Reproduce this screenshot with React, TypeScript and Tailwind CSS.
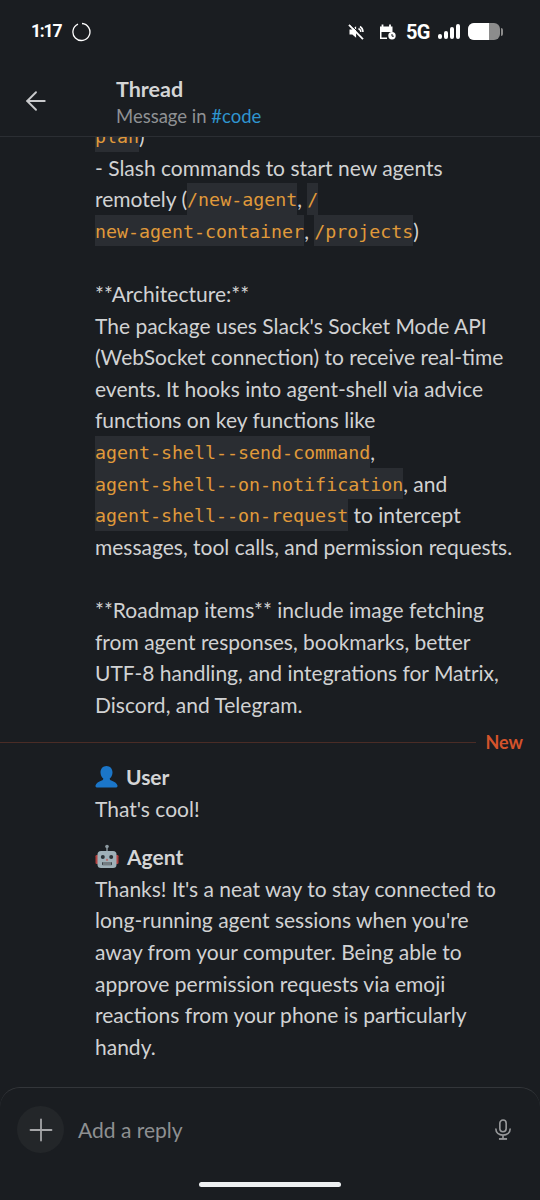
import React from 'react';
import { ArrowLeft, Plus } from 'lucide-react';

const Code: React.FC<{ children: React.ReactNode }> = ({ children }) => (
  <span className="inline-block h-[31.6px] leading-[33.6px] bg-[#2a2d32] text-[#e09a3a] font-['DejaVu_Sans_Mono',monospace] text-[18.3px] align-top">{children}</span>
);

const Line: React.FC<{ children?: React.ReactNode }> = ({ children }) => (
  <div className="h-[31.6px] leading-[31.6px] whitespace-nowrap">{children}</div>
);

const UserEmoji = () => (
  <svg width="23" height="24" viewBox="0 0 23 24" className="shrink-0">
    <path d="M11.500 1c3.600 0 6 2.800 6 6.400 0 2.600-1.200 4.800-2.800 6 .1 1 .5 1.600 1.600 2.100 3 1.200 5.700 2.600 6.200 5.100.2.900-.3 1.900-1.300 1.900H1.800c-1 0-1.500-1-1.300-1.900.5-2.500 3.200-3.900 6.200-5.100 1.100-.5 1.500-1.100 1.600-2.100-1.600-1.200-2.800-3.400-2.800-6C5.500 3.800 7.900 1 11.500 1z" fill="#1b76c9" />
  </svg>
);

const RobotEmoji = () => (
  <svg width="24" height="25" viewBox="0 0 24 25" className="shrink-0">
    <rect x="0.500" y="11" width="3" height="9" rx="1.200" fill="#b5413f" />
    <rect x="20.500" y="11" width="3" height="9" rx="1.200" fill="#b5413f" />
    <rect x="11.300" y="3" width="1.400" height="5" fill="#8d9aa1" />
    <circle cx="12" cy="2.500" r="1.800" fill="#8d9aa1" />
    <rect x="2.500" y="7" width="19" height="17" rx="3.500" fill="#9fb0b8" />
    <circle cx="7.800" cy="13" r="2" fill="#2b3338" />
    <circle cx="16.200" cy="13" r="2" fill="#2b3338" />
    <path d="M12 14.500l1.200 2h-2.400z" fill="#c9463f" />
    <rect x="7" y="18" width="10" height="3.200" rx="1" fill="#3a4349" />
    <path d="M9 18v3.200M11 18v3.200M13 18v3.200M15 18v3.200" stroke="#c9d3d8" strokeWidth="0.800" />
  </svg>
);

const StatusIcons = () => (
  <div className="flex items-center text-white">
    {/* muted speaker */}
    <svg width="18" height="18" viewBox="0 0 18 18" className="mr-[14px]">
      <path d="M2.500 6.500h2.800l3.800-3.300v11.600l-3.800-3.300H2.500z" fill="#fff" />
      <path d="M11.500 5.500c1.600 1 2.400 2.200 2.400 3.500M13 3.500c2 1.300 3 3.300 3 5.500" stroke="#fff" strokeWidth="1.500" fill="none" />
      <path d="M2 1.800l14 14.400" stroke="#fff" strokeWidth="1.900" />
      <path d="M3.200 1l14 14.400" stroke="#1a1d21" strokeWidth="1" />
    </svg>
    {/* calendar with clock */}
    <svg width="17" height="17" viewBox="0 0 17 17" className="mr-[10px]">
      <path d="M1 3.500h12.500v5.500H2.500v5.500h5.500V16H1z" fill="#fff" />
      <path d="M3.500 1.500v3M11 1.500v3" stroke="#fff" strokeWidth="1.800" />
      <circle cx="13" cy="12.800" r="3.700" fill="#fff" />
      <path d="M13 11v2.200h1.800" stroke="#1a1d21" strokeWidth="1" fill="none" />
    </svg>
    <span className="font-['Roboto',sans-serif] font-bold text-[20px] leading-none mr-[8px] tracking-[-0.5px]">5G</span>
    {/* signal */}
    <div className="flex items-end gap-[2px] h-[15px] mr-[8px]">
      <div className="w-[4px] h-[5px] rounded-[2px] bg-white" />
      <div className="w-[4px] h-[8px] rounded-[2px] bg-white" />
      <div className="w-[4px] h-[12px] rounded-[2px] bg-white" />
      <div className="w-[4px] h-[15px] rounded-[2px] bg-white" />
    </div>
    {/* battery */}
    <div className="flex h-[17px] w-[32px] rounded-[6px] overflow-hidden bg-[#8c8c8c]">
      <div className="w-[21px] bg-white" />
    </div>
    <div className="ml-[1px] h-[8px] w-[2px] rounded-r-[2px] bg-[#8c8c8c]" />
  </div>
);

export default function App() {
  return (
    <div className="h-[1200px] w-[540px] flex flex-col overflow-hidden bg-[#1a1d21] font-['Lato',sans-serif]">
      {/* status bar */}
      <div className="h-[64px] shrink-0 flex items-center justify-between pl-[31px] pr-[37px] pb-[1px]">
        <div className="flex items-center gap-[11px]">
          <span className="text-white text-[17.500px] font-bold leading-none tracking-[-1.200px] font-['Roboto',sans-serif]">1:17</span>
          <svg width="20" height="20" viewBox="0 0 20 20">
            <path d="M6 2.200A8.500 8.500 0 1 0 10 1.500" stroke="#fff" strokeWidth="1.300" fill="none" />
          </svg>
        </div>
        <StatusIcons />
      </div>

      {/* header */}
      <div className="h-[73px] shrink-0 flex border-b border-[#2b2e33]">
        <div className="w-[116px] pl-[21px] pt-[22px] text-[#c9cacc]">
          <ArrowLeft size={30} strokeWidth={1.500} />
        </div>
        <div className="pt-[12px]">
          <div className="text-[#d4d5d6] text-[21.500px] font-bold leading-[27px]">Thread</div>
          <div className="text-[#8f9194] text-[18.500px] leading-[27px]">
            Message in <span className="text-[#2f95cf]">#code</span>
          </div>
        </div>
      </div>

      {/* messages */}
      <div className="flex-1 min-h-0 overflow-hidden">
        <div className="-mt-[17px] text-[#d1d2d3] text-[21px]">
          <div className="pl-[95px]">
            <Line><Code>plan</Code>)</Line>
            <Line>- Slash commands to start new agents</Line>
            <Line>remotely (<Code>/new-agent</Code>, <Code>/</Code></Line>
            <Line><Code>new-agent-container</Code>, <Code>/projects</Code>)</Line>
            <Line />
            <Line>**Architecture:**</Line>
            <Line>The package uses Slack's Socket Mode API</Line>
            <Line>(WebSocket connection) to receive real-time</Line>
            <Line>events. It hooks into agent-shell via advice</Line>
            <Line>functions on key functions like</Line>
            <Line><Code>agent-shell--send-command</Code>,</Line>
            <Line><Code>agent-shell--on-notification</Code>, and</Line>
            <Line><Code>agent-shell--on-request</Code> to intercept</Line>
            <Line>messages, tool calls, and permission requests.</Line>
            <Line />
            <Line>**Roadmap items** include image fetching</Line>
            <Line>from agent responses, bookmarks, better</Line>
            <Line>UTF-8 handling, and integrations for Matrix,</Line>
            <Line>Discord, and Telegram.</Line>
          </div>

          <div className="mt-[10px] flex items-center h-[24px] pr-[17px]">
            <div className="flex-1 h-px bg-[#4a2c26]" />
            <span className="ml-[9px] text-[#d4532b] text-[18px] font-bold leading-none">New</span>
          </div>

          <div className="pl-[95px] mt-[6px]">
            <div className="flex items-center gap-[8px] h-[33px] font-bold text-[21px] text-[#d4d5d6]">
              <UserEmoji />
              <span>User</span>
            </div>
            <Line>That's cool!</Line>
            <div className="flex items-center gap-[8px] h-[32px] mt-[16px] font-bold text-[21px] text-[#d4d5d6]">
              <RobotEmoji />
              <span>Agent</span>
            </div>
            <Line>Thanks! It's a neat way to stay connected to</Line>
            <Line>long-running agent sessions when you're</Line>
            <Line>away from your computer. Being able to</Line>
            <Line>approve permission requests via emoji</Line>
            <Line>reactions from your phone is particularly</Line>
            <Line>handy.</Line>
          </div>
        </div>
      </div>

      {/* composer */}
      <div className="h-[113px] shrink-0 flex flex-col rounded-t-[20px] border-t border-[#33363a]">
        <div className="flex items-center pl-[17px] pr-[28px] pt-[18px]">
          <div className="w-[47px] h-[47px] rounded-full bg-[#232629] flex items-center justify-center text-[#a5a6a8]">
            <Plus size={36} strokeWidth={1.200} />
          </div>
          <span className="ml-[14px] flex-1 text-[#8e9092] text-[21px] leading-none">Add a reply</span>
          <svg width="18" height="23" viewBox="0 0 20 24" fill="none" stroke="#98999b" strokeWidth="1.800">
            <rect x="6.500" y="1.500" width="7" height="13" rx="3.500" />
            <path d="M2 11c0 4.500 3.500 7.200 8 7.200s8-2.700 8-7.200M10 18v4" />
            <path d="M5.500 22.500h9" strokeWidth="2" />
          </svg>
        </div>
        <div className="mt-auto mb-[13px] mx-auto w-[142px] h-[5px] rounded-full bg-[#eef0f2]" />
      </div>
    </div>
  );
}
